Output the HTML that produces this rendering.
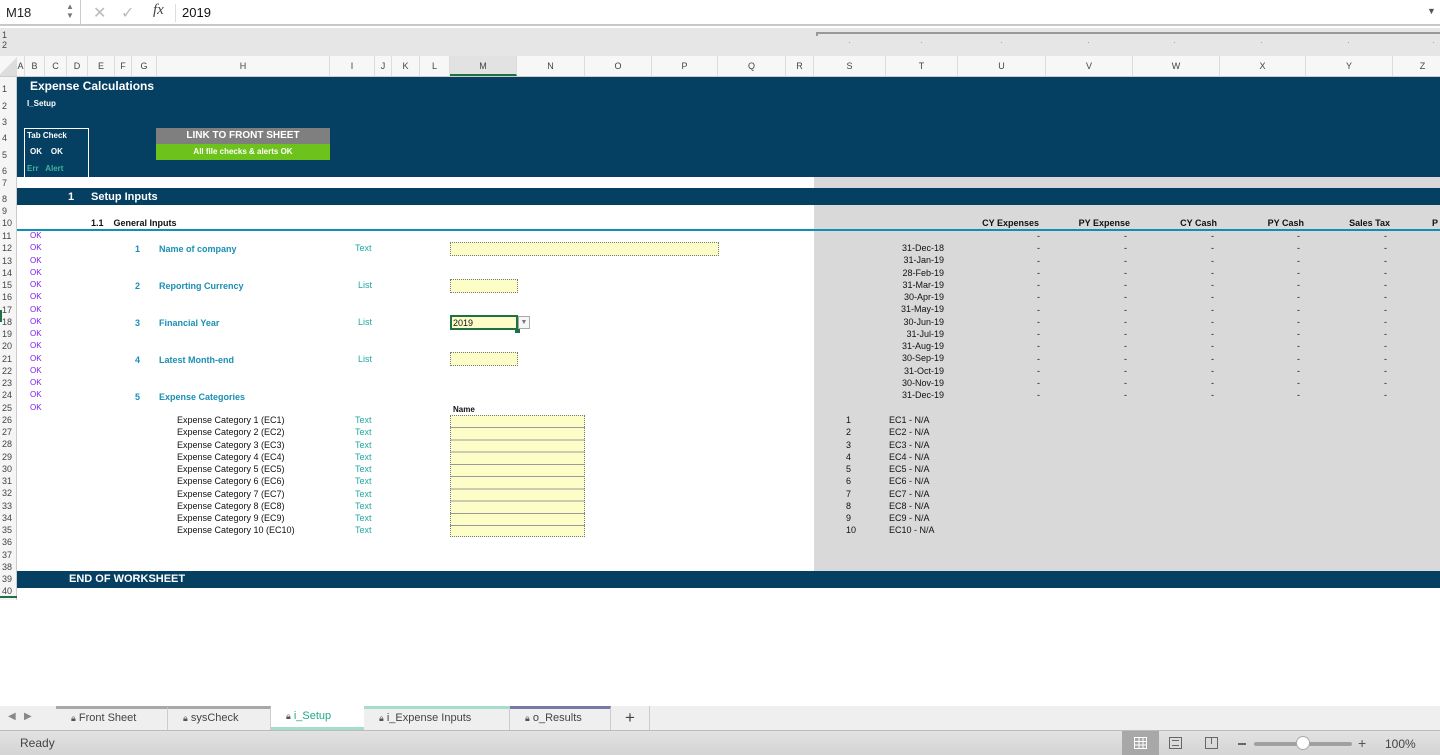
<!DOCTYPE html>
<html><head><meta charset="utf-8">
<style>
*{margin:0;padding:0;box-sizing:border-box}
body{width:1440px;height:755px;overflow:hidden;background:#fff;font-family:"Liberation Sans",Arial,sans-serif;position:relative}
.a{position:absolute;white-space:nowrap}
.t{position:absolute;white-space:nowrap;font-size:9px;line-height:12px}
.col{position:absolute;white-space:pre;font-size:9px;line-height:12.25px}
.b{font-weight:bold}
.dk{background:#053f62}
.ch{position:absolute;top:56px;height:20px;line-height:20px;font-size:9px;color:#444;text-align:center;border-right:1px solid #ddd}
.yb{position:absolute;background:#fdfdc8;border:1px dotted #777}
.tab{font-size:11px}
.lk{font-size:9px;color:#555}
</style></head><body>

<div class="a" style="left:0;top:0;width:1440px;height:26px;background:#fff;border-bottom:2px solid #c8c8c8"></div>
<div class="a" style="left:6px;top:5px;font-size:13px;color:#222">M18</div>
<div class="a" style="left:66px;top:2px;font-size:8px;color:#777;line-height:9px">▲<br>▼</div>
<div class="a" style="left:80px;top:0;width:1px;height:26px;background:#ccc"></div>
<div class="a" style="left:93px;top:3px;font-size:16px;color:#bbb">✕</div>
<div class="a" style="left:121px;top:3px;font-size:16px;color:#bbb">✓</div>
<div class="a" style="left:153px;top:2px;font-size:15px;font-style:italic;font-family:'Liberation Serif',serif;color:#444">fx</div>
<div class="a" style="left:175px;top:4px;width:1px;height:18px;background:#ddd"></div>
<div class="a" style="left:182px;top:5px;font-size:13px;color:#111">2019</div>
<div class="a" style="left:1427px;top:6px;font-size:9px;color:#555">▼</div>

<div class="a" style="left:0;top:28px;width:1440px;height:28px;background:#e6e6e6"></div>
<div class="a" style="left:2px;top:30px;font-size:9px;line-height:10px;color:#444">1<br>2</div>
<div class="a" style="left:816px;top:32px;width:624px;height:4px;border-top:2px solid #999;border-left:2px solid #999"></div>
<div class="a" style="left:848px;top:38px;font-size:8px;color:#888">·</div>
<div class="a" style="left:920px;top:38px;font-size:8px;color:#888">·</div>
<div class="a" style="left:1000px;top:38px;font-size:8px;color:#888">·</div>
<div class="a" style="left:1087px;top:38px;font-size:8px;color:#888">·</div>
<div class="a" style="left:1173px;top:38px;font-size:8px;color:#888">·</div>
<div class="a" style="left:1260px;top:38px;font-size:8px;color:#888">·</div>
<div class="a" style="left:1347px;top:38px;font-size:8px;color:#888">·</div>
<div class="a" style="left:1432px;top:38px;font-size:8px;color:#888">·</div>

<div class="a" style="left:0;top:56px;width:1440px;height:21px;background:#f7f7f7;border-bottom:1px solid #ccc"></div>
<div class="a" style="left:0;top:56px;width:17px;height:20px;background:linear-gradient(135deg,#f7f7f7 50%,#ddd 50%)"></div>
<div class="ch" style="left:17px;width:8px">A</div>
<div class="ch" style="left:25px;width:20px">B</div>
<div class="ch" style="left:45px;width:22px">C</div>
<div class="ch" style="left:67px;width:21px">D</div>
<div class="ch" style="left:88px;width:27px">E</div>
<div class="ch" style="left:115px;width:17px">F</div>
<div class="ch" style="left:132px;width:25px">G</div>
<div class="ch" style="left:157px;width:173px">H</div>
<div class="ch" style="left:330px;width:45px">I</div>
<div class="ch" style="left:375px;width:17px">J</div>
<div class="ch" style="left:392px;width:28px">K</div>
<div class="ch" style="left:420px;width:30px">L</div>
<div class="ch" style="left:450px;width:67px;background:#e2e2e2;border-bottom:2px solid #1e7145">M</div>
<div class="ch" style="left:517px;width:68px">N</div>
<div class="ch" style="left:585px;width:67px">O</div>
<div class="ch" style="left:652px;width:66px">P</div>
<div class="ch" style="left:718px;width:68px">Q</div>
<div class="ch" style="left:786px;width:28px">R</div>
<div class="ch" style="left:814px;width:72px">S</div>
<div class="ch" style="left:886px;width:72px">T</div>
<div class="ch" style="left:958px;width:88px">U</div>
<div class="ch" style="left:1046px;width:87px">V</div>
<div class="ch" style="left:1133px;width:87px">W</div>
<div class="ch" style="left:1220px;width:86px">X</div>
<div class="ch" style="left:1306px;width:87px">Y</div>
<div class="ch" style="left:1393px;width:60px">Z</div>

<div class="a" style="left:0;top:77px;width:17px;height:523px;background:#f5f5f5;border-right:1px solid #ccc"></div>
<div class="a" style="left:0;top:310px;width:2px;height:12px;background:#1e7145"></div>
<div class="a" style="left:0;top:596px;width:17px;height:2px;background:#1e7145"></div>

<div class="a dk" style="left:17px;top:77px;width:1423px;height:100px"></div>
<div class="a" style="left:814px;top:177px;width:626px;height:11px;background:#d9d9d9"></div>
<div class="a dk" style="left:17px;top:188px;width:1423px;height:17px"></div>
<div class="a" style="left:814px;top:205px;width:626px;height:366px;background:#d9d9d9"></div>
<div class="a" style="left:17px;top:229px;width:1423px;height:2px;background:#0f8fb5"></div>
<div class="a dk" style="left:17px;top:571px;width:1423px;height:17px"></div>

<div class="t" style="left:2px;top:83px;color:#444">1</div>
<div class="t" style="left:2px;top:100px;color:#444">2</div>
<div class="t" style="left:2px;top:116px;color:#444">3</div>
<div class="t" style="left:2px;top:132px;color:#444">4</div>
<div class="t" style="left:2px;top:149px;color:#444">5</div>
<div class="t" style="left:2px;top:165px;color:#444">6</div>
<div class="t" style="left:2px;top:177px;color:#444">7</div>
<div class="t" style="left:2px;top:193px;color:#444">8</div>
<div class="t" style="left:2px;top:205px;color:#444">9</div>
<div class="t" style="left:2px;top:217px;color:#444">10</div>
<div class="col" style="left:2px;top:230px;color:#444">11
12
13
14
15
16
17
18
19
20
21
22
23
24
25
26
27
28
29
30
31
32
33
34
35
36
37
38
39
40</div>

<div class="a b" style="left:30px;top:79px;font-size:12px;color:#fff">Expense Calculations</div>
<div class="a b" style="left:27px;top:99px;font-size:8px;color:#fff">I_Setup</div>
<div class="a" style="left:24px;top:128px;width:65px;height:49px;border:1px solid #fff;border-bottom:none"></div>
<div class="a b" style="left:27px;top:131px;font-size:8px;color:#fff">Tab Check</div>
<div class="a b" style="left:30px;top:147px;font-size:8px;color:#fff">OK&nbsp;&nbsp;&nbsp;&nbsp;OK</div>
<div class="a b" style="left:27px;top:164px;font-size:8px;color:#3fb59b">Err&nbsp;&nbsp;&nbsp;Alert</div>
<div class="a b" style="left:156px;top:128px;width:174px;height:16px;background:#7f7f7f;color:#fff;font-size:10px;text-align:center;line-height:16px">LINK TO FRONT SHEET</div>
<div class="a b" style="left:156px;top:144px;width:174px;height:16px;background:#6ec21c;color:#fff;font-size:8px;text-align:center;line-height:16px">All file checks &amp; alerts OK</div>

<div class="a b" style="left:68px;top:191px;font-size:11px;color:#fff">1</div>
<div class="a b" style="left:91px;top:191px;font-size:11px;color:#fff">Setup Inputs</div>
<div class="t b" style="left:91px;top:217px;color:#111">1.1&nbsp;&nbsp;&nbsp;&nbsp;General Inputs</div>

<div class="t b" style="right:401px;top:217px;color:#111">CY Expenses</div>
<div class="t b" style="right:310px;top:217px;color:#111">PY Expense</div>
<div class="t b" style="right:223px;top:217px;color:#111">CY Cash</div>
<div class="t b" style="right:136px;top:217px;color:#111">PY Cash</div>
<div class="t b" style="right:50px;top:217px;color:#111">Sales Tax</div>
<div class="t b" style="left:1432px;top:217px;color:#111">P</div>

<div class="col" style="left:30px;top:230px;color:#7a1cf0;font-size:8px">OK
OK
OK
OK
OK
OK
OK
OK
OK
OK
OK
OK
OK
OK
OK</div>

<div class="t b" style="left:135px;top:243px;color:#1a8fb5">1</div>
<div class="t b" style="left:159px;top:243px;color:#1a8fb5">Name of company</div>
<div class="t" style="left:355px;top:242px;color:#21a8a0">Text</div>
<div class="t b" style="left:135px;top:280px;color:#1a8fb5">2</div>
<div class="t b" style="left:159px;top:280px;color:#1a8fb5">Reporting Currency</div>
<div class="t" style="left:358px;top:279px;color:#21a8a0">List</div>
<div class="t b" style="left:135px;top:317px;color:#1a8fb5">3</div>
<div class="t b" style="left:159px;top:317px;color:#1a8fb5">Financial Year</div>
<div class="t" style="left:358px;top:316px;color:#21a8a0">List</div>
<div class="t b" style="left:135px;top:354px;color:#1a8fb5">4</div>
<div class="t b" style="left:159px;top:354px;color:#1a8fb5">Latest Month-end</div>
<div class="t" style="left:358px;top:353px;color:#21a8a0">List</div>
<div class="t b" style="left:135px;top:391px;color:#1a8fb5">5</div>
<div class="t b" style="left:159px;top:391px;color:#1a8fb5">Expense Categories</div>

<div class="yb" style="left:450px;top:242px;width:269px;height:14px"></div>
<div class="yb" style="left:450px;top:279px;width:68px;height:14px"></div>
<div class="a" style="left:450px;top:315px;width:68px;height:15px;background:#fdfdc8;border:2px solid #1e7145"></div>
<div class="t" style="left:453px;top:317px;color:#111">2019</div>
<div class="a" style="left:515px;top:328px;width:5px;height:5px;background:#1e7145"></div>
<div class="a" style="left:518px;top:316px;width:12px;height:13px;border:1px solid #aaa;background:#f6f6f6;font-size:7px;color:#777;text-align:center;line-height:12px">▼</div>
<div class="yb" style="left:450px;top:352px;width:68px;height:14px"></div>

<div class="t b" style="left:453px;top:404px;color:#111;font-size:8px">Name</div>
<div class="col" style="left:177px;top:414px;color:#111">Expense Category 1 (EC1)
Expense Category 2 (EC2)
Expense Category 3 (EC3)
Expense Category 4 (EC4)
Expense Category 5 (EC5)
Expense Category 6 (EC6)
Expense Category 7 (EC7)
Expense Category 8 (EC8)
Expense Category 9 (EC9)
Expense Category 10 (EC10)</div>
<div class="col" style="left:355px;top:414px;color:#21a8a0">Text
Text
Text
Text
Text
Text
Text
Text
Text
Text</div>
<div class="a" style="left:450px;top:415px;width:135px;height:122px;background:repeating-linear-gradient(#fdfdc8 0,#fdfdc8 11.2px,#999 11.2px,#999 12.25px);border:1px dotted #777"></div>

<div class="col" style="left:846px;top:414px;color:#111">1
2
3
4
5
6
7
8
9
10</div>
<div class="col" style="left:889px;top:414px;color:#111">EC1 - N/A
EC2 - N/A
EC3 - N/A
EC4 - N/A
EC5 - N/A
EC6 - N/A
EC7 - N/A
EC8 - N/A
EC9 - N/A
EC10 - N/A</div>

<div class="col" style="right:496px;top:242px;color:#111;text-align:right">31-Dec-18
31-Jan-19
28-Feb-19
31-Mar-19
30-Apr-19
31-May-19
30-Jun-19
31-Jul-19
31-Aug-19
30-Sep-19
31-Oct-19
30-Nov-19
31-Dec-19</div>
<div class="col" style="left:1037px;top:230px;color:#111">-
-
-
-
-
-
-
-
-
-
-
-
-
-</div>
<div class="col" style="left:1124px;top:230px;color:#111">-
-
-
-
-
-
-
-
-
-
-
-
-
-</div>
<div class="col" style="left:1211px;top:230px;color:#111">-
-
-
-
-
-
-
-
-
-
-
-
-
-</div>
<div class="col" style="left:1297px;top:230px;color:#111">-
-
-
-
-
-
-
-
-
-
-
-
-
-</div>
<div class="col" style="left:1384px;top:230px;color:#111">-
-
-
-
-
-
-
-
-
-
-
-
-
-</div>

<div class="a b" style="left:69px;top:573px;font-size:11px;color:#fff">END OF WORKSHEET</div>

<div class="a" style="left:0;top:706px;width:1440px;height:25px;background:#efefef;border-bottom:1px solid #bbb"></div>
<div class="a" style="left:8px;top:711px;font-size:10px;color:#888">◀&nbsp;&nbsp;&nbsp;▶</div>
<div class="a tab" style="left:56px;top:706px;width:112px;height:24px;border-top:3px solid #a8a8a8;border-right:1px solid #ccc;color:#444;padding:3px 0 0 15px"><span class="lk">🔒︎</span> Front Sheet</div>
<div class="a tab" style="left:168px;top:706px;width:103px;height:24px;border-top:3px solid #a8a8a8;border-right:1px solid #ccc;color:#444;padding:3px 0 0 15px"><span class="lk">🔒︎</span> sysCheck</div>
<div class="a tab" style="left:271px;top:706px;width:93px;height:24px;background:#fff;border-bottom:3px solid #a6dccc;color:#22a98a;padding:4px 0 0 15px"><span class="lk">🔒︎</span> i_Setup</div>
<div class="a tab" style="left:364px;top:706px;width:146px;height:24px;border-top:3px solid #a6dccc;border-right:1px solid #ccc;color:#444;padding:3px 0 0 15px"><span class="lk">🔒︎</span> i_Expense Inputs</div>
<div class="a tab" style="left:510px;top:706px;width:101px;height:24px;border-top:3px solid #787aa6;border-right:1px solid #ccc;color:#444;padding:3px 0 0 15px"><span class="lk">🔒︎</span> o_Results</div>
<div class="a" style="left:611px;top:706px;width:39px;height:24px;border-right:1px solid #ccc;font-size:17px;color:#444;text-align:center;line-height:24px">+</div>

<div class="a" style="left:0;top:731px;width:1440px;height:24px;background:linear-gradient(#e2e2e2,#d4d4d4)"></div>
<div class="a" style="left:20px;top:736px;font-size:12px;color:#444">Ready</div>
<div class="a" style="left:1122px;top:731px;width:37px;height:24px;background:#a8a8a8"></div>
<div class="a" style="left:1134px;top:737px;width:13px;height:12px;border:1px solid #fff;background:linear-gradient(90deg,transparent 3.5px,#fff 3.5px,#fff 4.5px,transparent 4.5px,transparent 7.5px,#fff 7.5px,#fff 8.5px,transparent 8.5px),linear-gradient(transparent 3px,#fff 3px,#fff 4px,transparent 4px,transparent 6.5px,#fff 6.5px,#fff 7.5px,transparent 7.5px)"></div>
<div class="a" style="left:1169px;top:737px;width:13px;height:12px;border:1px solid #666"></div>
<div class="a" style="left:1172px;top:740px;width:7px;height:6px;border-top:1px solid #666;border-bottom:1px solid #666"></div>
<div class="a" style="left:1205px;top:737px;width:13px;height:12px;border:1px solid #666"></div>
<div class="a" style="left:1211px;top:737px;width:1px;height:7px;background:#666"></div>
<div class="a" style="left:1238px;top:743px;width:8px;height:2px;background:#666"></div>
<div class="a" style="left:1254px;top:742px;width:98px;height:4px;border-radius:2px;background:#a0a0a0"></div>
<div class="a" style="left:1296px;top:736px;width:14px;height:14px;border-radius:7px;background:#fff;border:1px solid #aaa"></div>
<div class="a" style="left:1358px;top:735px;font-size:14px;color:#555">+</div>
<div class="a" style="left:1385px;top:737px;font-size:12px;color:#444">100%</div>
</body></html>
